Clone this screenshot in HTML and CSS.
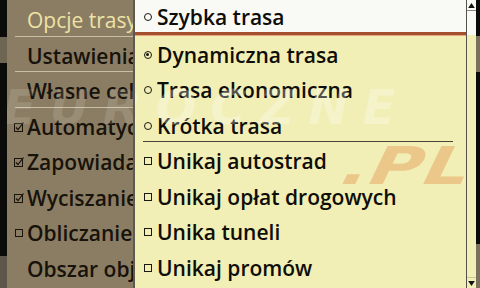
FILE: index.html
```html
<!DOCTYPE html>
<html>
<head>
<meta charset="utf-8">
<link rel="stylesheet" href="styles.css">
</head>
<body>
<div class="screen">
  <div class="edge edge-left"><div class="patch p1"></div><div class="patch p2"></div></div>
  <div class="main">
    <ul class="menu">
      <li class="item active sep"><span class="ico"></span>Opcje trasy</li>
      <li class="item sep"><span class="ico"></span>Ustawienia mapy</li>
      <li class="item sep"><span class="ico"></span>Własne cele</li>
      <li class="item"><span class="ico"><svg viewBox="0 0 10 10" width="10" height="10"><rect x="0.5" y="1.5" width="8" height="8" fill="none" stroke="#1a140a"/><path d="M2 5.5 L4 7.5 L9.5 0.5" fill="none" stroke="#1a140a" stroke-width="1.2"/></svg></span>Automatyczne</li>
      <li class="item"><span class="ico"><svg viewBox="0 0 10 10" width="10" height="10"><rect x="0.5" y="1.5" width="8" height="8" fill="none" stroke="#1a140a"/><path d="M2 5.5 L4 7.5 L9.5 0.5" fill="none" stroke="#1a140a" stroke-width="1.2"/></svg></span>Zapowiadanie</li>
      <li class="item"><span class="ico"><svg viewBox="0 0 10 10" width="10" height="10"><rect x="0.5" y="1.5" width="8" height="8" fill="none" stroke="#1a140a"/><path d="M2 5.5 L4 7.5 L9.5 0.5" fill="none" stroke="#1a140a" stroke-width="1.2"/></svg></span>Wyciszanie</li>
      <li class="item"><span class="ico"><svg viewBox="0 0 10 10" width="10" height="10"><rect x="1.5" y="1.5" width="7" height="7" fill="none" stroke="#1a140a"/></svg></span>Obliczanie</li>
      <li class="item"><span class="ico"></span>Obszar objazdu</li>
    </ul>
    <div class="watermark">
      <span class="wm-main">EUROCZNE</span>
    </div>
    <div class="popup">
      <ul class="options">
        <li class="opt first"><span class="mark radio"></span>Szybka trasa</li>
        <li class="opt"><span class="mark radio on"></span>Dynamiczna trasa</li>
        <li class="opt"><span class="mark radio"></span>Trasa ekonomiczna</li>
        <li class="opt split"><span class="mark radio"></span>Krótka trasa</li>
        <li class="opt"><span class="mark box"></span>Unikaj autostrad</li>
        <li class="opt"><span class="mark box"></span>Unikaj opłat drogowych</li>
        <li class="opt"><span class="mark box"></span>Unika tuneli</li>
        <li class="opt"><span class="mark box"></span>Unikaj promów</li>
      </ul>
      <div class="scroll">
        <div class="arrow up"><svg viewBox="0 0 8 6" width="8" height="6"><path d="M0 6 L4 0 L8 6 Z" fill="#111"/></svg></div>
        <div class="track"></div>
        <div class="arrow down"><svg viewBox="0 0 8 6" width="8" height="6"><path d="M0 0 L4 6 L8 0 Z" fill="#111"/></svg></div>
      </div>
      <span class="wm-pl">.PL</span>
      <span class="wm-over">EUROCZNE</span>
    </div>
  </div>
  <div class="edge edge-right"><div class="patch p3"></div><div class="patch p4"></div></div>
</div>
</body>
</html>
```
FILE: styles.css
```css
* { box-sizing: border-box; }
html, body { margin: 0; padding: 0; }
body {
  width: 480px;
  height: 288px;
  overflow: hidden;
  background: #0a0a08;
  font-family: "Open Sans", "DejaVu Sans", sans-serif;
}
.screen {
  display: flex;
  width: 480px;
  height: 288px;
}
.edge {
  position: relative;
  background: #0b0b09;
  height: 288px;
}
.edge-left { width: 7px; }
.edge-right { width: 4px; }
.patch { position: absolute; left: 0; right: 0; background: #6e6553; }
.p1 { top: 37px; height: 26px; }
.p2 { top: 256px; height: 32px; background: #5e5648; }
.p3 { top: 36px; height: 36px; background: #7b705b; }
.p4 { top: 244px; height: 44px; background: #7b705b; }

.main {
  position: relative;
  flex: 1;
  height: 288px;
  background: #8b7d63;
  overflow: hidden;
}
.menu {
  list-style: none;
  margin: 0;
  padding: 1px 0 0 0;
}
.item {
  display: flex;
  align-items: center;
  height: 35.5px;
  padding-left: 7px;
  padding-top: 3px;
  font-size: 21px;
  font-weight: 600;
  color: #17120a;
  white-space: nowrap;
  position: relative;
}
.item.sep::after {
  content: "";
  position: absolute;
  left: 8px;
  right: 0;
  bottom: 0;
  height: 1px;
  background: #c9c1a6;
}
.item.active { color: #ece3a4; font-weight: 500; }
.ico {
  width: 13px;
  flex: none;
  display: flex;
  align-items: center;
}
.ico svg { display: block; }

.watermark {
  position: absolute;
  inset: 0;
  pointer-events: none;
  z-index: 1;
}
.wm-main, .wm-over {
  position: absolute;
  top: 79px;
  font-family: "DejaVu Sans", sans-serif;
  font-weight: bold;
  font-style: italic;
  font-size: 48px;
  letter-spacing: 14px;
  white-space: nowrap;
  color: rgba(255, 255, 255, 0.12);
  pointer-events: none;
}
.wm-main { left: -4px; }
.wm-over { left: -130px; color: rgba(255, 255, 255, 0.28); }
.wm-pl {
  position: absolute;
  left: 208px;
  top: 136px;
  font-family: "DejaVu Sans", sans-serif;
  font-weight: bold;
  font-style: italic;
  font-size: 52px;
  letter-spacing: 1px;
  transform: skewX(-12deg) scaleX(1.38);
  transform-origin: left;
  color: rgba(232, 172, 108, 0.6);
  pointer-events: none;
}

.popup {
  position: absolute;
  left: 126px;
  top: 0;
  width: 343px;
  height: 288px;
  display: flex;
  border-left: 2px solid #5f5a50;
  background: #f1efb5;
  z-index: 2;
  overflow: hidden;
}
.options {
  list-style: none;
  margin: 0;
  padding: 1px 0 0 0;
  flex: 1;
}
.opt {
  display: flex;
  align-items: center;
  height: 35.5px;
  padding-left: 9px;
  padding-top: 3px;
  font-size: 21px;
  font-weight: 600;
  color: #0f0d08;
  white-space: nowrap;
  position: relative;
}
.opt.first {
  background: #f9f9f6;
  height: 34.5px;
  margin-top: -1px;
  border-bottom: 3px solid #a44f2e;
  box-shadow: 0 1px 0 #e8a77a;
  margin-bottom: 1px;
  padding-top: 2px;
}
.opt.split::after {
  content: "";
  position: absolute;
  left: 8px;
  right: 13px;
  bottom: 0;
  height: 1px;
  background: #4a4436;
}
.mark {
  flex: none;
  width: 8px;
  height: 8px;
  margin-right: 5px;
  border: 1.3px solid #1a1810;
  position: relative;
}
.radio { border-radius: 50%; }
.radio.on::after {
  content: "";
  position: absolute;
  left: 1.2px;
  top: 1.2px;
  width: 3px;
  height: 3px;
  border-radius: 50%;
  background: #1a1810;
}
.box { border-radius: 0; }

.scroll {
  width: 10px;
  flex: none;
  display: flex;
  flex-direction: column;
  border-left: 1px solid #55524a;
  background: linear-gradient(#f9f9f6 0 35px, #f1efb5 35px);
}
.arrow {
  height: 11px;
  display: flex;
  align-items: center;
  justify-content: center;
}
.arrow.up { border-bottom: 1px solid #8a887c; }
.arrow.down { border-top: 1px solid #c8c69a; }
.arrow svg { display: block; width: 7px; height: 5px; }
.track { flex: 1; }
```
